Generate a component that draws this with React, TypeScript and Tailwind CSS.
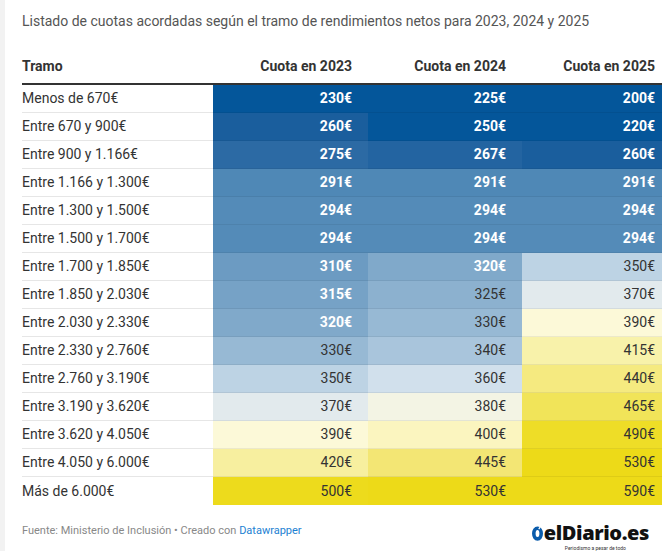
const rows: [string, number, number, number][] = [
  ["Menos de 670€", 230, 225, 200],
  ["Entre 670 y 900€", 260, 250, 220],
  ["Entre 900 y 1.166€", 275, 267, 260],
  ["Entre 1.166 y 1.300€", 291, 291, 291],
  ["Entre 1.300 y 1.500€", 294, 294, 294],
  ["Entre 1.500 y 1.700€", 294, 294, 294],
  ["Entre 1.700 y 1.850€", 310, 320, 350],
  ["Entre 1.850 y 2.030€", 315, 325, 370],
  ["Entre 2.030 y 2.330€", 320, 330, 390],
  ["Entre 2.330 y 2.760€", 330, 340, 415],
  ["Entre 2.760 y 3.190€", 350, 360, 440],
  ["Entre 3.190 y 3.620€", 370, 380, 465],
  ["Entre 3.620 y 4.050€", 390, 400, 490],
  ["Entre 4.050 y 6.000€", 420, 445, 530],
  ["Más de 6.000€", 500, 530, 590],
];

// colour scale, one full class string per value
const scale: Record<number, string> = {
  200: "bg-[#04569a] text-white font-bold",
  220: "bg-[#04569a] text-white font-bold",
  225: "bg-[#04569a] text-white font-bold",
  230: "bg-[#04569a] text-white font-bold",
  250: "bg-[#04569a] text-white font-bold",
  260: "bg-[#1a5e9d] text-white font-bold",
  267: "bg-[#2364a1] text-white font-bold",
  275: "bg-[#2c6aa4] text-white font-bold",
  291: "bg-[#4f88b6] text-white font-bold",
  294: "bg-[#548bb8] text-white font-bold",
  310: "bg-[#6c9bc2] text-white font-bold",
  315: "bg-[#76a2c6] text-white font-bold",
  320: "bg-[#80a9ca] text-white font-bold",
  325: "bg-[#8cb1cf] text-[#333]",
  330: "bg-[#97b9d4] text-[#333]",
  340: "bg-[#a9c5dc] text-[#333]",
  350: "bg-[#bdd3e4] text-[#333]",
  360: "bg-[#d1e0ec] text-[#333]",
  370: "bg-[#e2eaed] text-[#333]",
  380: "bg-[#f3f4e4] text-[#333]",
  390: "bg-[#fcf9d8] text-[#333]",
  400: "bg-[#fbf5bf] text-[#333]",
  415: "bg-[#f8f2aa] text-[#333]",
  420: "bg-[#f7ef9f] text-[#333]",
  440: "bg-[#f5ea80] text-[#333]",
  445: "bg-[#f3e674] text-[#333]",
  465: "bg-[#f1e459] text-[#333]",
  490: "bg-[#eedd27] text-[#333]",
  500: "bg-[#eddb1c] text-[#333]",
  530: "bg-[#edda18] text-[#333]",
  590: "bg-[#edda18] text-[#333]",
};

const widths = ["w-[155px] pr-[16px]", "w-[154px] pr-[16px]", "w-[140px] pr-[7px]"];

function Logo() {
  return (
    <div className="flex flex-col items-center">
      <div className="flex items-center gap-[1px]">
        <svg width="11" height="15" viewBox="0 0 11 15">
          <ellipse cx="5.5" cy="7.6" rx="3.7" ry="5.3" fill="none" stroke="#0b5cab" strokeWidth="3.6" />
          <rect x="6.8" y="0.8" width="1.3" height="2.4" fill="#fff" transform="rotate(35 7.4 2)" />
        </svg>
        <span className="font-['Open_Sans',sans-serif] font-extrabold text-[20px] leading-[20px] tracking-[-0.4px] text-[#111]">
          elDiario.es
        </span>
      </div>
      <span className="mt-[2px] ml-[10px] text-[5px] leading-[6px] text-[#333]">Periodismo a pesar de todo</span>
    </div>
  );
}

export default function App() {
  return (
    <div className="flex w-[669px] h-[551px] overflow-hidden bg-white font-['Roboto',sans-serif] text-[#333]">
      <div className="w-[5px] shrink-0 bg-[#f2f2f2]" />
      <div className="flex-1 pl-[17px] pr-[7px]">
        <p className="pt-[12px] text-[14px] leading-[18px] text-[#555]">
          Listado de cuotas acordadas según el tramo de rendimientos netos para 2023, 2024 y 2025
        </p>

        <div className="mt-[22px] flex h-[33px] items-end pb-[8px] border-b-2 border-[#333] text-[14px] leading-[18px] font-bold">
          <div className="w-[191px]">Tramo</div>
          <div className={`${widths[0]} text-right`}>Cuota en 2023</div>
          <div className={`${widths[1]} text-right`}>Cuota en 2024</div>
          <div className={`${widths[2]} text-right`}>Cuota en 2025</div>
        </div>

        {rows.map(([label, a, b, c], i) => {
          const last = i === rows.length - 1;
          return (
            <div key={label} className="flex h-[28px] text-[14px]">
              <div className={`w-[191px] flex items-center ${last ? "" : "border-b border-[#e6e6e6]"}`}>{label}</div>
              {[a, b, c].map((v, j) => (
                <div
                  key={j}
                  className={`${widths[j]} ${scale[v]} flex items-center justify-end ${last ? "" : "border-b border-[#00000010]"}`}
                >
                  {v}€
                </div>
              ))}
            </div>
          );
        })}

        <div className="mt-[16px] flex items-start justify-between">
          <p className="pt-[3px] text-[11px] leading-[14px] text-[#888]">
            Fuente: Ministerio de Inclusión • Creado con <span className="text-[#1d81d2]">Datawrapper</span>
          </p>
          <div className="mr-[13px] pt-[2px]">
            <Logo />
          </div>
        </div>
      </div>
    </div>
  );
}
